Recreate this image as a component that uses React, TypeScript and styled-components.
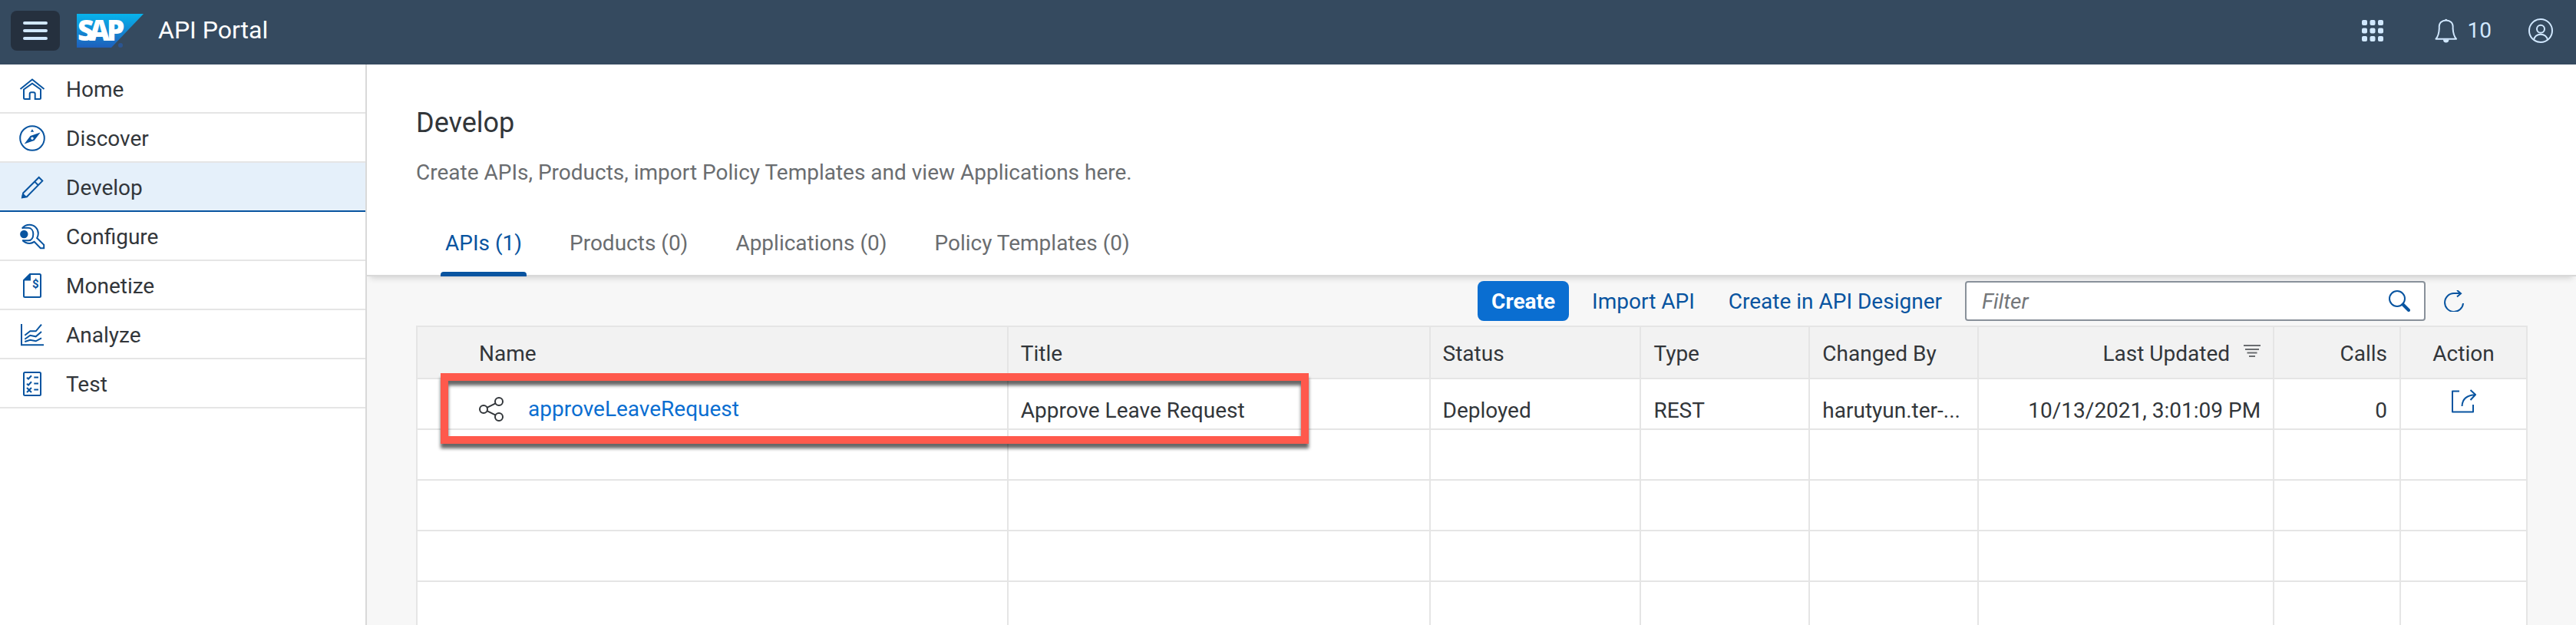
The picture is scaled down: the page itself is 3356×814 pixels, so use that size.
import React from "react";
import styled, { createGlobalStyle } from "styled-components";

const color = {
  shell: "#354a5f",
  shellIcon: "#d1e8ff",
  blue: "#0854a0",
  link: "#0a6ed1",
  text: "#32363a",
  muted: "#6a6d70",
  line: "#e5e5e5",
  edge: "#d9d9d9",
  page: "#f7f7f7",
};

const GlobalStyle = createGlobalStyle`
  *, *::before, *::after { box-sizing: border-box; }
  body {
    margin: 0;
    background: ${color.page};
    color: ${color.text};
    font-family: Roboto, "Liberation Sans", sans-serif;
    font-size: 28px;
    line-height: 32px;
  }
  button, input { font: inherit; color: inherit; }
  h1, p, ul { margin: 0; padding: 0; }
  svg { display: block; flex: none; }
`;

const Page = styled.div`
  display: flex;
  flex-direction: column;
  height: 100vh;
`;

const ShellBar = styled.header`
  display: flex;
  align-items: flex-start;
  height: 84px;
  flex: none;
  padding: 12px 16px 0 14px;
  background: ${color.shell};
  color: ${color.shellIcon};
`;

const MenuButton = styled.button`
  display: flex;
  align-items: center;
  justify-content: center;
  width: 64px;
  height: 52px;
  margin: 2px 22px 0 0;
  padding: 0;
  border: 0;
  border-radius: 8px;
  background: #25303e;
`;

const Logo = styled.svg`
  margin-right: 18px;
`;

const ProductName = styled.div`
  flex: 1;
  color: #fff;
  font-size: 32px;
  line-height: 54px;
`;

const ShellActions = styled.div`
  display: flex;
  gap: 20px;
  padding-top: 2px;
`;

const ShellButton = styled.button`
  display: flex;
  align-items: center;
  gap: 12px;
  height: 52px;
  padding: 0 14px;
  border: 0;
  background: none;

  &:first-child { margin-right: 18px; }
`;

const Body = styled.div`
  display: flex;
  flex: 1;
  min-height: 0;
`;

const SideNav = styled.nav`
  width: 478px;
  flex: none;
  border-right: 2px solid ${color.edge};
  background: #fff;
`;

const NavList = styled.ul`
  list-style: none;
`;

const NavLink = styled.a<{ $active?: boolean }>`
  display: flex;
  align-items: center;
  gap: 26px;
  height: 64px;
  padding: 4px 24px 0;
  border-bottom: 2px solid ${(p) => (p.$active ? color.blue : color.line)};
  background: ${(p) => (p.$active ? "#e5f0fa" : "#fff")};
  color: ${color.text};
  text-decoration: none;

  svg { color: ${color.blue}; }
`;

const Main = styled.main`
  flex: 1;
  min-width: 0;
  overflow: auto;
  scrollbar-width: none;
`;

const PageHeader = styled.section`
  padding: 52px 64px 0;
  border-bottom: 2px solid ${color.edge};
  background: #fff;
  box-shadow: 0 6px 8px -4px rgba(0, 0, 0, 0.16);
`;

const Title = styled.h1`
  font-size: 36px;
  font-weight: 400;
  line-height: 48px;
`;

const Description = styled.p`
  margin-top: 25px;
  color: ${color.muted};
`;

const Tabs = styled.div`
  display: flex;
  gap: 50px;
  margin: 60px 0 -2px;
  padding: 0 32px;
`;

const Tab = styled.button<{ $active?: boolean }>`
  padding: 0;
  border: 0;
  background: none;
  color: ${(p) => (p.$active ? color.blue : color.muted)};

  span {
    display: block;
    padding: 0 6px 21px;
  }

  &::after {
    content: "";
    display: block;
    height: 6px;
    border-radius: 4px 4px 0 0;
    background: ${(p) => (p.$active ? color.blue : "transparent")};
  }
`;

const Content = styled.section`
  padding: 0 63px 0 64px;
`;

const Toolbar = styled.div`
  display: flex;
  align-items: center;
  justify-content: flex-end;
  gap: 16px;
  height: 64px;
  padding-right: 73px;
`;

const ToolButton = styled.button<{ $primary?: boolean }>`
  height: 52px;
  padding: 2px ${(p) => (p.$primary ? 18 : 14)}px 0;
  border: 0;
  border-radius: 8px;
  background: ${(p) => (p.$primary ? color.link : "none")};
  color: ${(p) => (p.$primary ? "#fff" : color.blue)};
  font-weight: ${(p) => (p.$primary ? 700 : 400)};
`;

const IconButton = styled.button`
  display: flex;
  align-items: center;
  justify-content: center;
  width: 44px;
  height: 44px;
  padding: 0;
  border: 0;
  background: none;
  color: ${color.blue};
`;

const SearchField = styled.div`
  display: flex;
  align-items: center;
  width: 600px;
  height: 52px;
  padding: 0 10px 0 20px;
  border: 2px solid #89919a;
  border-radius: 4px;
  background: #fff;

  input {
    flex: 1;
    min-width: 0;
    padding: 2px 0 0;
    border: 0;
    outline: 0;
    background: none;
  }
  input::placeholder {
    color: #74777a;
    font-style: italic;
    opacity: 1;
  }
`;

const TableWrap = styled.div`
  position: relative;
`;

const Table = styled.table`
  width: 100%;
  table-layout: fixed;
  border-collapse: separate;
  border-spacing: 0;
  border: solid ${color.line};
  border-width: 2px 0 0 2px;
  background: #fff;
`;

const Col = styled.col<{ $share: number }>`
  width: ${(p) => p.$share}%;
`;

type Align = "left" | "right" | "center";

const HeadCell = styled.th<{ $align?: Align; $indent?: boolean }>`
  height: 68px;
  padding: 4px 16px 0 ${(p) => (p.$indent ? 80 : 16)}px;
  border: solid ${color.line};
  border-width: 0 2px 2px 0;
  background: #f2f2f2;
  font-weight: 400;
  text-align: ${(p) => p.$align || "left"};
`;

const HeadSort = styled.span`
  display: flex;
  justify-content: flex-end;
  gap: 18px;
`;

const Cell = styled.td<{ $align?: Align }>`
  height: 66px;
  padding: 18px 16px 0;
  overflow: hidden;
  border: solid ${color.line};
  border-width: 0 2px 2px 0;
  text-align: ${(p) => p.$align || "left"};
  text-overflow: ellipsis;
  white-space: nowrap;
`;

const NameCell = styled(Cell)`
  padding: 14px 16px 0 80px;
`;

const ActionCell = styled(Cell)`
  padding: 0 16px 6px;
`;

const NameLink = styled.a`
  display: flex;
  align-items: center;
  gap: 32px;
  color: ${color.link};
  text-decoration: none;

  svg { color: ${color.text}; }
`;

const RowAction = styled(IconButton)`
  margin: 0 auto;
`;

const Highlight = styled.div`
  position: absolute;
  top: 62px;
  left: 32px;
  width: calc(48% - 189px);
  height: 92px;
  border: 10px solid #ff594c;
  filter: drop-shadow(0 6px 2px rgba(0, 0, 0, 0.6));
  pointer-events: none;
`;

const NavIcon = ({ children }: { children: React.ReactNode }) => (
  <svg width="36" height="36" viewBox="0 2 36 36" fill="none" stroke="currentColor" strokeWidth="2" aria-hidden="true">
    {children}
  </svg>
);

const navItems = [
  {
    label: "Home",
    icon: (
      <NavIcon>
        <path d="M2.5 19 18 6.500 33.500 19" />
        <path d="M7 19.500 18 11.700l11 7.800V30.500q0 1.500-1.500 1.500H21.700V25.300q0-2-2-2h-3q-2 0-2 2V32H8.500Q7 32 7 30.500z" />
      </NavIcon>
    ),
  },
  {
    label: "Discover",
    icon: (
      <NavIcon>
        <circle cx="18" cy="19" r="15.800" />
        <path fill="currentColor" stroke="none" fillRule="evenodd" d="M7.600 26.600 15.600 16 28.600 11.400 20.600 22zM18 17.400a1.700 1.700 0 1 0 .01 0z" />
        <path fill="currentColor" stroke="none" d="M18 7.300 20.200 10.800h-4.400z" />
      </NavIcon>
    ),
  },
  {
    label: "Develop",
    active: true,
    icon: (
      <NavIcon>
        <path d="M6.300 26.300 26.700 6l4.600 4.600L11 31.200 5 32.200z M21 11.400l4.800 4.800" />
        <path fill="currentColor" stroke="none" d="M4 33.200 5.400 26l5.600 5.600z" />
      </NavIcon>
    ),
  },
  {
    label: "Configure",
    icon: (
      <NavIcon>
        <circle cx="7.300" cy="16" r="5.200" fill="currentColor" stroke="none" />
        <path d="M4.700 8.600C7 5.600 10.600 3.800 14.500 3.800 21 3.800 25.800 9 25.800 15c0 2.300-.5 4.200-1.600 6l9 8.800v4.500h-4.400l-8.200-8.400c-2 1.400-3.900 2-6.100 2-3.600 0-6.500-1.300-8.700-3.700" />
        <path d="M5 7.800h8c4 0 6.300 3.700 6.300 8.200s-2.300 8.300-6.300 8.300H5" />
      </NavIcon>
    ),
  },
  {
    label: "Monetize",
    icon: (
      <NavIcon>
        <path d="M7 12 15 4h12.500q1.500 0 1.500 1.500v27q0 1.500-1.500 1.500h-19Q7 34 7 32.500z" />
        <path fill="currentColor" stroke="none" d="M6.500 12.600 15 4h1v8.600z" />
        <text x="22.300" y="22" textAnchor="middle" fontSize="15" fontWeight="700" fill="currentColor" stroke="none">$</text>
      </NavIcon>
    ),
  },
  {
    label: "Analyze",
    icon: (
      <NavIcon>
        <path d="M4 5v27.300h29M8.300 19.700l7-5.400h7.400L30 5.700M8.300 24.700l7-5 7.400 1.600L30 15M8.300 28l7-2.300 7.400 1.600 7.300-4" />
      </NavIcon>
    ),
  },
  {
    label: "Test",
    icon: (
      <NavIcon>
        <rect x="7" y="4" width="22" height="30" rx="1.500" />
        <path d="M11 10.700l2 1.800 4-4.200M11 18.700l2 1.800 4-4.200M11 24l6 6M17 24l-6 6M20.300 10.500H26M20.300 18.500H26M20.300 26.500H26" />
      </NavIcon>
    ),
  },
];

const tabs = ["APIs (1)", "Products (0)", "Applications (0)", "Policy Templates (0)"];
const columnShares = [28, 20, 10, 8, 8, 14, 6, 6];
const emptyRows = [1, 2, 3, 4];

export default function App() {
  return (
    <>
      <GlobalStyle />
      <Page>
        <ShellBar>
          <MenuButton aria-label="Toggle navigation">
            <svg width="32" height="24" viewBox="0 0 32 24" stroke="currentColor" strokeWidth="4" strokeLinecap="round">
              <path d="M2 2h28M2 12h28M2 22h28" />
            </svg>
          </MenuButton>
          <Logo width="88" height="54" viewBox="0 -6 88 54" role="img" aria-label="SAP">
            <defs>
              <linearGradient id="sapBlue" x1="0" y1="0" x2="0" y2="1">
                <stop offset="0" stopColor="#07b4ec" />
                <stop offset="1" stopColor="#1e5fbb" />
              </linearGradient>
            </defs>
            <path d="M0 0H87L45 44H0z" fill="url(#sapBlue)" />
            <circle cx="57" cy="41" r="3" fill="#2b5591" />
            <g fontFamily="'Open Sans', sans-serif" fontSize="37" fontWeight="800" fill="#fff">
              <text x="1" y="35">S</text>
              <text x="16" y="35">A</text>
              <text x="39" y="35">P</text>
            </g>
          </Logo>
          <ProductName>API Portal</ProductName>
          <ShellActions>
            <ShellButton aria-label="Products">
              <svg width="28" height="28" viewBox="0 0 28 28" fill="currentColor">
                {[0, 10.5, 21].map((y) =>
                  [0, 10.5, 21].map((x) => <rect key={`${x}-${y}`} x={x} y={y} width="7" height="7" rx="2" />)
                )}
              </svg>
            </ShellButton>
            <ShellButton aria-label="10 notifications">
              <svg width="32" height="32" viewBox="0 0 32 32" fill="none" stroke="currentColor" strokeWidth="2" strokeLinejoin="round">
                <path d="M2.500 26.700Q6.500 22 6.800 13C6 5 11 2.500 15.700 2.500S25.400 5 24.600 13Q25 22 29 26.700z" />
                <path d="M12 27.500h7.400a3.700 4 0 0 1-7.400 0zM14 2.500a1.700 1.700 0 0 1 3.400 0z" fill="currentColor" stroke="none" />
              </svg>
              10
            </ShellButton>
            <ShellButton aria-label="User profile">
              <svg width="32" height="32" viewBox="0 0 32 32" fill="none" stroke="currentColor" strokeWidth="2">
                <circle cx="16" cy="16" r="15" />
                <circle cx="16" cy="13.700" r="5" />
                <path d="M7.300 28c0-4.500 4-7.300 8.700-7.300s8.700 2.800 8.700 7.300" />
              </svg>
            </ShellButton>
          </ShellActions>
        </ShellBar>
        <Body>
          <SideNav aria-label="Main">
            <NavList>
              {navItems.map((item) => (
                <li key={item.label}>
                  <NavLink href="#" $active={item.active} aria-current={item.active ? "page" : undefined}>
                    {item.icon}
                    {item.label}
                  </NavLink>
                </li>
              ))}
            </NavList>
          </SideNav>
          <Main>
            <PageHeader>
              <Title>Develop</Title>
              <Description>Create APIs, Products, import Policy Templates and view Applications here.</Description>
              <Tabs role="tablist">
                {tabs.map((label, i) => (
                  <Tab key={label} role="tab" aria-selected={i === 0} $active={i === 0}>
                    <span>{label}</span>
                  </Tab>
                ))}
              </Tabs>
            </PageHeader>
            <Content>
              <Toolbar>
                <ToolButton $primary>Create</ToolButton>
                <ToolButton>Import API</ToolButton>
                <ToolButton>Create in API Designer</ToolButton>
                <SearchField>
                  <input type="text" placeholder="Filter" aria-label="Filter" />
                  <IconButton aria-label="Search">
                    <svg width="28" height="28" viewBox="0 0 28 28" fill="none" stroke="currentColor" strokeWidth="2">
                      <circle cx="11" cy="11" r="10" />
                      <path d="M18.500 18.500l7.500 7.500" strokeWidth="4" strokeLinecap="round" />
                    </svg>
                  </IconButton>
                </SearchField>
                <IconButton aria-label="Refresh">
                  <svg width="28" height="28" viewBox="0 0 28 28" fill="none" stroke="currentColor" strokeWidth="2">
                    <path d="M25 17A12 12 0 1 1 13 4h9M17 0l5 4.200-5 4.200" />
                  </svg>
                </IconButton>
              </Toolbar>
              <TableWrap>
                <Table>
                  <colgroup>
                    {columnShares.map((share, i) => (
                      <Col key={i} $share={share} />
                    ))}
                  </colgroup>
                  <thead>
                    <tr>
                      <HeadCell $indent>Name</HeadCell>
                      <HeadCell>Title</HeadCell>
                      <HeadCell>Status</HeadCell>
                      <HeadCell>Type</HeadCell>
                      <HeadCell>Changed By</HeadCell>
                      <HeadCell $align="right" aria-sort="descending">
                        <HeadSort>
                          Last Updated
                          <svg width="22" height="24" viewBox="0 0 22 24" stroke={color.muted} strokeWidth="2">
                            <path d="M0 5h22M2 10h18M4.500 14.500h13M7 19h8" />
                          </svg>
                        </HeadSort>
                      </HeadCell>
                      <HeadCell $align="right">Calls</HeadCell>
                      <HeadCell $align="center">Action</HeadCell>
                    </tr>
                  </thead>
                  <tbody>
                    <tr>
                      <NameCell>
                        <NameLink href="#">
                          <svg width="32" height="32" viewBox="0 0 32 32" fill="none" stroke="currentColor" strokeWidth="2">
                            <circle cx="6" cy="16" r="5" />
                            <circle cx="26" cy="6" r="5" />
                            <circle cx="26" cy="26" r="5" />
                            <path d="M10.500 13.800 21.500 8.300M10.500 18.200l11 5.500" />
                          </svg>
                          approveLeaveRequest
                        </NameLink>
                      </NameCell>
                      <Cell>Approve Leave Request</Cell>
                      <Cell>Deployed</Cell>
                      <Cell>REST</Cell>
                      <Cell>harutyun.ter-...</Cell>
                      <Cell $align="right">10/13/2021, 3:01:09 PM</Cell>
                      <Cell $align="right">0</Cell>
                      <ActionCell>
                        <RowAction aria-label="Share">
                          <svg width="34" height="32" viewBox="0 0 34 32" fill="none" stroke="currentColor" strokeWidth="2" strokeLinejoin="round">
                            <path d="M11 2.500H2v27h27V20M14.500 22Q15 8 32 7M25.500 1l6.500 6-6.500 7" />
                          </svg>
                        </RowAction>
                      </ActionCell>
                    </tr>
                    {emptyRows.map((row) => (
                      <tr key={row}>
                        {columnShares.map((_, i) => (
                          <Cell key={i} />
                        ))}
                      </tr>
                    ))}
                  </tbody>
                </Table>
                <Highlight />
              </TableWrap>
            </Content>
          </Main>
        </Body>
      </Page>
    </>
  );
}
